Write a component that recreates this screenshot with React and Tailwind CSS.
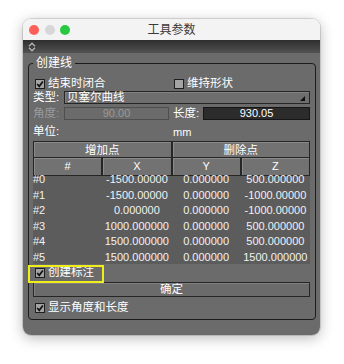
const FONT = "font-['Liberation_Sans','Noto_Sans_CJK_SC',sans-serif]";

function Check({ checked }) {
  return (
    <svg width="10" height="10" viewBox="0 0 10 10" className="shrink-0">
      <rect x="0.5" y="0.5" width="9" height="9" fill="#a3a3a3" stroke="#1e1e1e" />
      {checked && (
        <path d="M2.2 5 L4.2 7.3 L7.9 2.4" fill="none" stroke="#111" strokeWidth="1.7" />
      )}
    </svg>
  );
}

function Btn({ children, className = "" }) {
  return (
    <div
      className={`flex items-center justify-center border border-[#262626] bg-[#727272] shadow-[inset_1px_1px_0_#8a8a8a] text-white ${className}`}
    >
      {children}
    </div>
  );
}

const rows = [
  ["#0", "-1500.00000", "0.000000", "500.000000"],
  ["#1", "-1500.00000", "0.000000", "-1000.00000"],
  ["#2", "0.000000", "0.000000", "-1000.00000"],
  ["#3", "1000.000000", "0.000000", "500.000000"],
  ["#4", "1500.000000", "0.000000", "500.000000"],
  ["#5", "1500.000000", "0.000000", "1500.000000"],
];

export default function App() {
  return (
    <div className={`w-[344px] h-[364px] bg-white pt-[19px] pl-[23px] ${FONT}`}>
      <div className="w-[297px] h-[316px] rounded-[8px] overflow-hidden flex flex-col shadow-[0_3px_14px_rgba(0,0,0,0.28),0_0_0_1px_rgba(0,0,0,0.12)]">
        {/* title bar */}
        <div className="h-[21px] bg-[#f3f3f3] flex items-center shrink-0">
          <div className="flex items-center gap-[5.5px] pl-[6px] w-[60px] pt-[1px]">
            <div className="w-[10px] h-[10px] rounded-full bg-[#fe5f57]" />
            <div className="w-[10px] h-[10px] rounded-full bg-[#d7d7d9]" />
            <div className="w-[10px] h-[10px] rounded-full bg-[#28c840]" />
          </div>
          <div className="flex-1 text-center text-[12px] text-[#3a3a3a] pt-[1px]">工具参数</div>
          <div className="w-[60px]" />
        </div>
        {/* dark strip */}
        <div className="h-[13px] bg-linear-to-b from-[#2e2e2e] to-[#525252] flex items-center pl-[5px] shrink-0">
          <svg width="8" height="10" viewBox="0 0 8 10">
            <path d="M1 4.2 L4 1.2 L7 4.2" fill="none" stroke="#b5b5b5" strokeWidth="1.3" />
            <path d="M1 5.8 L4 8.8 L7 5.8" fill="none" stroke="#b5b5b5" strokeWidth="1.3" />
          </svg>
        </div>
        {/* body */}
        <div className="flex-1 bg-[#6b6b6b] pt-[10px] pl-[5px] pr-[4px]">
          <div className="relative border border-[#1c1c1c] rounded-[4px] pl-[4px] pr-[5px] pb-[4px] text-[11px] text-white">
            <div className="absolute top-[-9px] left-[4px] px-[3px] bg-[#6b6b6b] text-[12px] leading-[16px] text-white">
              创建线
            </div>
            {/* row 1 */}
            <div className="mt-[11px] h-[14px] grid grid-cols-2">
              <div className="flex items-center pl-[2px] gap-[3px]">
                <Check checked />
                <span className="text-[11.5px]">结束时闭合</span>
              </div>
              <div className="flex items-center pl-[2.5px] gap-[3px]">
                <Check />
                <span className="text-[11.5px]">维持形状</span>
              </div>
            </div>
            {/* type row */}
            <div className="mt-[2px] h-[13px] flex items-center">
              <span className="w-[31px] text-[11.5px]">类型:</span>
              <div className="relative flex-1 h-[13px] border border-[#262626] bg-[#6e6e6e] shadow-[inset_1px_1px_0_#828282] flex items-center pl-[2px] text-[11.5px]">
                贝塞尔曲线
                <svg width="5" height="5" viewBox="0 0 5 5" className="absolute right-[4px] bottom-[2px]">
                  <polygon points="5,0 5,5 0,5" fill="#111" />
                </svg>
              </div>
            </div>
            {/* angle row */}
            <div className="mt-[3px] h-[13px] flex items-center">
              <span className="w-[31px] text-[11.5px] text-[#9a9a9a]">角度:</span>
              <div className="w-[105px] h-[13px] border border-[#4e4e4e] bg-[#6b6b6b] flex items-center justify-center text-[#999999]">
                90.00
              </div>
              <span className="ml-[4px] w-[30px] text-[11.5px]">长度:</span>
              <div className="flex-1 h-[13px] border border-[#161616] bg-[#2c2c2c] flex items-center justify-center text-white">
                930.05
              </div>
            </div>
            {/* unit row */}
            <div className="mt-[5px] h-[14px] flex items-center">
              <span className="w-[140px] text-[11.5px]">单位:</span>
              <span>mm</span>
            </div>
            {/* buttons */}
            <div className="mt-[2px] h-[13px] grid grid-cols-2">
              <Btn className="text-[11.5px]">增加点</Btn>
              <Btn className="text-[11.5px]">删除点</Btn>
            </div>
            {/* header */}
            <div className="mt-[3px] h-[12px] grid grid-cols-4">
              <Btn>#</Btn>
              <Btn>X</Btn>
              <Btn>Y</Btn>
              <Btn>Z</Btn>
            </div>
            {/* body */}
            <div className="h-[95px] bg-[#5c5c5c] pt-[2px]">
              {rows.map((r) => (
                <div key={r[0]} className="h-[15.5px] grid grid-cols-4 items-center text-[#f2f2f2]">
                  <span>{r[0]}</span>
                  <span className="text-center">{r[1]}</span>
                  <span className="text-center">{r[2]}</span>
                  <span className="text-center">{r[3]}</span>
                </div>
              ))}
            </div>
            {/* create annotation */}
            <div className="relative h-[18px] flex items-center pl-[2px] gap-[3px]">
              <Check checked />
              <span className="text-[11.5px]">创建标注</span>
              <div className="absolute left-[-5px] top-[1px] w-[76px] h-[18px] border-2 border-[#eeee1a]" />
            </div>
            {/* ok button */}
            <div className="h-[15px] border border-[#262626] bg-[#6b6b6b] shadow-[inset_1px_1px_0_#808080] flex items-center justify-center text-[11.5px]">
              确定
            </div>
            {/* show */}
            <div className="mt-[4px] h-[14px] flex items-center pl-[2px] gap-[3px]">
              <Check checked />
              <span className="text-[11.5px]">显示角度和长度</span>
            </div>
          </div>
        </div>
      </div>
    </div>
  );
}
